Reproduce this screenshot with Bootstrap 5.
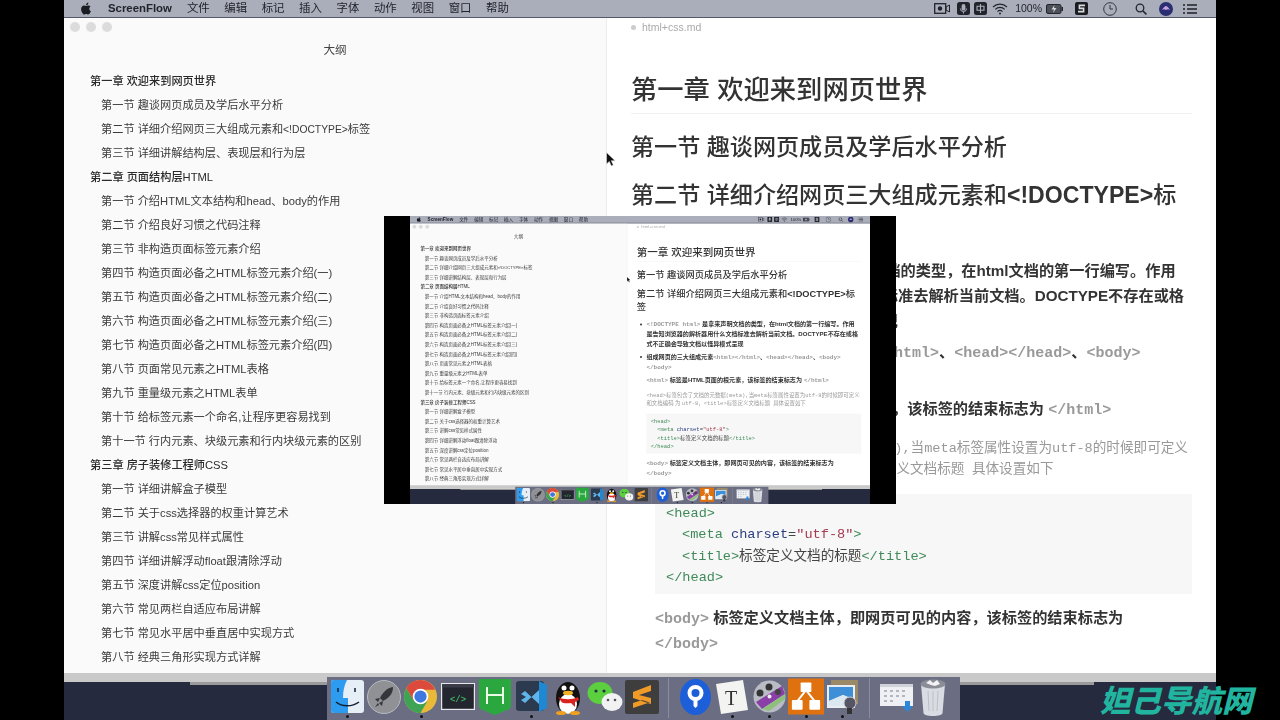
<!DOCTYPE html>
<html lang="zh-CN">
<head>
    <meta charset="UTF-8">
    <meta name="viewport" content="width=device-width, initial-scale=1.0">
    <title>ScreenFlow recording</title>
    <link rel="stylesheet" href="https://cdn.jsdelivr.net/npm/bootstrap@5.3.0/dist/css/bootstrap.min.css">
    <style>
        :root {
            --cjk: "Liberation Sans", "Noto Sans CJK SC", sans-serif;
            --mono: "Liberation Mono", "Noto Sans CJK SC", monospace;
        }
        html, body { margin: 0; width: 1280px; height: 720px; overflow: hidden; background: #000; font-family: var(--cjk); }

        .stage { position: relative; width: 1280px; height: 720px; }
        .stage-live { position: absolute; left: 64px; top: 0; filter: blur(.5px); }
        .mac-screen { position: relative; width: 1152px; height: 720px; overflow: hidden;
            background: linear-gradient(#2b2e42, #262a3e); }

        /* menu bar */
        .menu-bar { height: 18px; background: #a9aeba; border-bottom: 1px solid #55586a; padding: 0 19px 0 16px; font-size: 11.4px; color: #22242c; }
        .menu-bar .app-name { font-weight: 700; font-size: 11.4px; margin: 0 15px 0 16px; }
        .menu-items { gap: 14.6px; }
        .menu-pct { font-size: 10.5px; }
        .sb-5 { margin-left: 5px; } .sb-7 { margin-left: 7px; } .sb-10 { margin-left: 10px; } .sb-12 { margin-left: 12px; }
        .sb-15 { margin-left: 15px; } .sb-18 { margin-left: 18px; }

        /* window */
        .behind-win { position: absolute; left: 126px; top: 600px; width: 904px; height: 85px; background: #9a9a9a; }
        .app-win { position: absolute; left: 0; top: 18px; width: 1152px; height: 664px; background: #fff; overflow: hidden; border-bottom: 9px solid #c9c9c9; }
        .outline-pane { width: 543px; background: #fbfafb; color: #3b3b3b; border-right: 1px solid #ececec; }
        .traffic { gap: 6px; padding: 4px 0 0 6px; height: 18px; }
        .traffic span { width: 10px; height: 10px; border-radius: 50%; background: #dcdcdc; }
        .outline-title { font-size: 11.6px; text-align: center; line-height: 16px; margin: 6px 0 11px; color: #444; }
        .outline-list { margin: 0; padding: 0 0 0 26px; list-style: none; font-size: 11.2px; line-height: 24px; }
        .outline-list span { font-size: 10.3px; line-height: 1; }
        .ol-ch { font-weight: 500; color: #2a2a2a; }
        .ol-sec { padding-left: 11px; }

        .doc-pane { flex: 1; padding: 0 24px 0 24px; color: #333; min-width: 0; overflow: hidden; }
        .doc-tab { height: 18px; font-size: 10.5px; color: #aaa; gap: 6px; padding-top: 1px; }
        .doc-tab i { width: 5px; height: 5px; border-radius: 50%; background: #ccc; }
        .doc-h1 { font-size: 26.3px; font-weight: 500; line-height: 36px; margin: 36px 0 0; padding-bottom: 5px; border-bottom: 1px solid #f1f1f1; color: #333; }
        .doc-h2 { font-size: 23.1px; font-weight: 500; line-height: 33px; margin: 0; color: #333; }
        .doc-h2 b { font-weight: 700; }
        .doc-h2.first { margin-top: 16.5px; }
        .doc-h2.second { margin-top: 15px; }
        .doc-list { margin: 13px 0 0; padding-left: 24px; font-size: 15.2px; line-height: 25px; font-weight: 700; }
        .doc-list li + li { margin-top: 6px; }
        .doc-p { margin: 0 0 0 24px; font-size: 15.2px; line-height: 25px; font-weight: 700; }
        .doc-p.html-line { margin-top: 7px; }
        .doc-p.muted-line { margin-top: 16px; font-size: 13.6px; line-height: 21px; font-weight: 400; color: #999; }
        .doc-p.body-line { margin-top: 11px; }
        .tag-code { font-family: var(--mono); font-size: 15px; line-height: 1; color: #999; }
        .muted-line .tag-code { font-size: 13.6px; }
        .code-box { margin: 15.5px 0 0 24px; background: #f7f7f7; padding: 9px 11px; height: 100px; font-family: var(--mono); font-size: 13.6px; line-height: 21.4px; color: #444; }
        .code-box .in { padding-left: 16px; }
        .c-tag { color: #3f8a58; }
        .c-attr { color: #2b3f80; }
        .c-str { color: #a53b50; }

        .cursor-arrow { position: absolute; left: 542px; top: 152px; }

        /* dock */
        .dock-bar { position: absolute; left: 263px; top: 677px; width: 633px; height: 43px; background: #6b6e82; padding: 0 0 0 2px; }
        .dock-item { position: relative; width: 36.8px; height: 37px; flex: none; display: flex; align-items: center; justify-content: center; margin-top: 1px; }
        .dock-on::after { content: ""; position: absolute; left: 17px; top: 37px; width: 3px; height: 3px; border-radius: 50%; background: #111; }
        .dock-sep { width: 1px; height: 40px; background: #8b8d9e; margin: 1px 8px; flex: none; }

        /* nested recording */
        .inset-box { position: absolute; left: 384px; top: 216px; width: 512px; height: 288px; background: #000; filter: blur(.6px); }
        .inset-view { width: 460px; height: 288px; margin-left: 26px; overflow: hidden; }
        .inset-view .mac-screen { transform: scale(.4); transform-origin: 0 0; }

        .site-mark { position: absolute; left: 1100px; top: 679px; font-family: "Noto Sans CJK SC", sans-serif; font-size: 30.5px; line-height: 40px; font-weight: 900; font-style: italic; color: #21b5a0; white-space: nowrap; }
    </style>
</head>
<body>
<div class="stage">
    <div class="stage-live">
    <div class="mac-screen" id="screen">
        <div class="behind-win"></div>
        <div class="app-win d-flex">
            <div class="outline-pane flex-shrink-0">
                <div class="traffic d-flex"><span></span><span></span><span></span></div>
                <div class="outline-title">大纲</div>
                <ul class="outline-list">
                    <li class="ol-ch">第一章 欢迎来到网页世界</li>
                    <li class="ol-sec">第一节 趣谈网页成员及学后水平分析</li>
                    <li class="ol-sec">第二节 详细介绍网页三大组成元素和<span>&lt;!DOCTYPE&gt;</span>标签</li>
                    <li class="ol-sec">第三节 详细讲解结构层、表现层和行为层</li>
                    <li class="ol-ch">第二章 页面结构层HTML</li>
                    <li class="ol-sec">第一节 介绍HTML文本结构和head、body的作用</li>
                    <li class="ol-sec">第二节 介绍良好习惯之代码注释</li>
                    <li class="ol-sec">第三节 非构造页面标签元素介绍</li>
                    <li class="ol-sec">第四节 构造页面必备之HTML标签元素介绍(一)</li>
                    <li class="ol-sec">第五节 构造页面必备之HTML标签元素介绍(二)</li>
                    <li class="ol-sec">第六节 构造页面必备之HTML标签元素介绍(三)</li>
                    <li class="ol-sec">第七节 构造页面必备之HTML标签元素介绍(四)</li>
                    <li class="ol-sec">第八节 页面常见元素之HTML表格</li>
                    <li class="ol-sec">第九节 重量级元素之HTML表单</li>
                    <li class="ol-sec">第十节 给标签元素一个命名,让程序更容易找到</li>
                    <li class="ol-sec">第十一节 行内元素、块级元素和行内块级元素的区别</li>
                    <li class="ol-ch">第三章 房子装修工程师CSS</li>
                    <li class="ol-sec">第一节 详细讲解盒子模型</li>
                    <li class="ol-sec">第二节 关于css选择器的权重计算艺术</li>
                    <li class="ol-sec">第三节 讲解css常见样式属性</li>
                    <li class="ol-sec">第四节 详细讲解浮动float跟清除浮动</li>
                    <li class="ol-sec">第五节 深度讲解css定位position</li>
                    <li class="ol-sec">第六节 常见两栏自适应布局讲解</li>
                    <li class="ol-sec">第七节 常见水平居中垂直居中实现方式</li>
                    <li class="ol-sec">第八节 经典三角形实现方式详解</li>
                </ul>
            </div>
            <div class="doc-pane">
                <div class="doc-tab d-flex align-items-center"><i></i><span>html+css.md</span></div>
                <h1 class="doc-h1">第一章 欢迎来到网页世界</h1>
                <h2 class="doc-h2 first">第一节 趣谈网页成员及学后水平分析</h2>
                <h2 class="doc-h2 second">第二节 详细介绍网页三大组成元素和<b>&lt;!DOCTYPE&gt;</b>标签</h2>
                <ul class="doc-list">
                    <li><span class="tag-code">&lt;!DOCTYPE html&gt;</span> 是拿来声明文档的类型，在html文档的第一行编写。作用<br>是告知浏览器的解析器用什么文档标准去解析当前文档。DOCTYPE不存在或格式不正确会导致文档以怪异模式呈现</li>
                    <li>组成网页的三大组成元素<span class="tag-code">&lt;html&gt;&lt;/html&gt;</span>、<span class="tag-code">&lt;head&gt;&lt;/head&gt;</span>、<span class="tag-code">&lt;body&gt;</span> <span class="tag-code">&lt;/body&gt;</span></li>
                </ul>
                <p class="doc-p html-line"><span class="tag-code">&lt;html&gt;</span> 标签是HTML页面的根元素，该标签的结束标志为 <span class="tag-code">&lt;/html&gt;</span></p>
                <p class="doc-p muted-line"><span class="tag-code">&lt;head&gt;</span>标签包含了文档的元数据<span class="tag-code">(meta),</span>当<span class="tag-code">meta</span>标签属性设置为<span class="tag-code">utf-8</span>的时候即可定义 和文档编码 为&nbsp;<span class="tag-code">utf-8</span>，<span class="tag-code">&lt;title&gt;</span>标签定义文档标题&nbsp;&nbsp;具体设置如下</p>
                <div class="code-box">
                    <div><span class="c-tag">&lt;head&gt;</span></div>
                    <div class="in"><span class="c-tag">&lt;meta</span> <span class="c-attr">charset</span>=<span class="c-str">"utf-8"</span><span class="c-tag">&gt;</span></div>
                    <div class="in"><span class="c-tag">&lt;title&gt;</span>标签定义文档的标题<span class="c-tag">&lt;/title&gt;</span></div>
                    <div><span class="c-tag">&lt;/head&gt;</span></div>
                </div>
                <p class="doc-p body-line"><span class="tag-code">&lt;body&gt;</span> 标签定义文档主体，即网页可见的内容，该标签的结束标志为<br><span class="tag-code">&lt;/body&gt;</span></p>
            </div>
        </div>

        <div class="menu-bar position-relative d-flex align-items-center">
            <svg width="12" height="13" viewBox="0 0 24 24"><path fill="#1c1d22" d="M12.152 6.896c-.948 0-2.415-1.078-3.96-1.04-2.04.027-3.91 1.183-4.961 3.014-2.117 3.675-.546 9.103 1.519 12.09 1.013 1.454 2.208 3.09 3.792 3.039 1.52-.065 2.09-.987 3.935-.987 1.831 0 2.35.987 3.96.948 1.637-.026 2.676-1.48 3.676-2.948 1.156-1.688 1.636-3.325 1.662-3.415-.039-.013-3.182-1.221-3.22-4.857-.026-3.04 2.48-4.494 2.597-4.559-1.429-2.09-3.623-2.324-4.39-2.376-2-.156-3.675 1.09-4.61 1.09zM15.53 3.83c.843-1.012 1.4-2.427 1.245-3.83-1.207.052-2.662.805-3.532 1.818-.78.896-1.454 2.338-1.273 3.714 1.338.104 2.715-.688 3.559-1.701"/></svg>
            <span class="app-name">ScreenFlow</span>
            <div class="menu-items d-flex">
                <span>文件</span><span>编辑</span><span>标记</span><span>插入</span><span>字体</span><span>动作</span><span>视图</span><span>窗口</span><span>帮助</span>
            </div>
            <div class="ms-auto d-flex align-items-center">
                <svg width="16" height="11" viewBox="0 0 16 11"><rect x=".7" y=".7" width="11" height="9.6" fill="none" stroke="#22242c" stroke-width="1.3"/><circle cx="6" cy="5.5" r="2.2" fill="#22242c"/><path d="M12 4l3.5-2v7L12 7z" fill="none" stroke="#22242c"/></svg>
                <svg class="sb-7" width="13" height="13" viewBox="0 0 13 13"><rect width="13" height="13" rx="2.5" fill="#22242c"/><rect x="4.6" y="2" width="3.8" height="6.6" rx="1.9" fill="#a9aeba"/><path d="M3.4 6.5a3.1 3.1 0 0 0 6.2 0M6.5 9.6v2" stroke="#a9aeba" fill="none"/></svg>
                <svg class="ms-1" width="13" height="13" viewBox="0 0 13 13"><rect width="13" height="13" rx="2.5" fill="#22242c"/><path d="M3 4.3h7v4H3zM6.5 2v9" stroke="#a9aeba" stroke-width="1.1" fill="none"/></svg>
                <svg class="sb-5" width="16" height="12" viewBox="0 0 16 12"><path d="M1 4a10 10 0 0 1 14 0M3.3 6.3a6.8 6.8 0 0 1 9.4 0M5.5 8.6a3.6 3.6 0 0 1 5 0" stroke="#22242c" stroke-width="1.1" fill="none"/><circle cx="8" cy="10.6" r="1" fill="#22242c"/></svg>
                <span class="menu-pct sb-7">100%</span>
                <svg class="ms-1" width="17" height="10" viewBox="0 0 17 10"><rect x=".5" y=".5" width="14.5" height="9" rx="1.5" fill="#4d5059" stroke="#22242c"/><rect x="15.5" y="3" width="1.5" height="4" fill="#22242c"/><path d="M8.5 1L5.5 5.5h2.5L7 9l3.5-5H8z" fill="#d5d7dd"/></svg>
                <svg class="sb-12" width="13" height="13" viewBox="0 0 13 13"><rect width="13" height="13" rx="2" fill="#1b1c20"/><path d="M10 3.4H4.4v3h4.2v3.2H3" stroke="#d8dae0" stroke-width="1.6" fill="none"/></svg>
                <svg class="sb-15" width="14" height="14" viewBox="0 0 14 14"><circle cx="7" cy="7" r="6.3" fill="none" stroke="#33353e"/><path d="M7 3v4h3" stroke="#33353e" fill="none"/></svg>
                <svg class="sb-18" width="12" height="12" viewBox="0 0 12 12"><circle cx="5" cy="5" r="3.8" fill="none" stroke="#22242c" stroke-width="1.3"/><path d="M8 8l3.4 3.4" stroke="#22242c" stroke-width="1.6"/></svg>
                <svg class="sb-12" width="14" height="14" viewBox="0 0 14 14"><circle cx="7" cy="7" r="7" fill="#2b2f72"/><path d="M3 8c2-3 3-4 4-4s2 1 4 4c-1.500-1-2.500-1-4 0-1.500-1-2.500-1-4 0z" fill="#c8a3e0"/></svg>
                <svg class="sb-10" width="14" height="10" viewBox="0 0 14 10"><path d="M4 1h10M4 5h10M4 9h10M0 1h2M0 5h2M0 9h2" stroke="#1f2026" stroke-width="1.5"/></svg>
            </div>
        </div>

        <svg class="cursor-arrow" width="10" height="15" viewBox="0 0 10 15"><path d="M.5.5v11.500l2.800-2.600 2 4.600 2-.9-2-4.400h3.800z" fill="#111" stroke="#eee" stroke-width=".5"/></svg>

        <div class="dock-bar d-flex">
            <div class="dock-item dock-on">
                <svg width="33" height="33" viewBox="0 0 33 33"><rect width="33" height="33" rx="3" fill="#e6eef6"/><path d="M3 0h13c-3 6-4 11-4 18h5v15H3a3 3 0 0 1-3-3V3a3 3 0 0 1 3-3z" fill="#2d9cf0"/><path d="M7 8v4M24 8v4M5 22c6 5 16 5 23 0" stroke="#123" stroke-width="1.500" fill="none"/></svg>
            </div>
            <div class="dock-item">
                <svg width="34" height="34" viewBox="0 0 34 34"><circle cx="17" cy="17" r="16.500" fill="#8f9195" stroke="#b8bac0"/><path d="M26 7c-6 1-10 5-13 11l3 3c6-3 10-7 10-14zM13 18l-5 1 3 3zM16 21l-1 5-3-3zM11 23l-3 4 4-2z" fill="#34363c"/></svg>
            </div>
            <div class="dock-item dock-on">
                <svg width="35" height="35" viewBox="0 0 36 36"><circle cx="18" cy="18" r="17" fill="#e9b93a"/><path d="M18 1a17 17 0 0 0-14.700 8.500L11 22l7-11h15A17 17 0 0 0 18 1z" fill="#dc4a3e"/><path d="M3.300 9.500A17 17 0 0 0 18 35l7-12-7 2-7-3z" fill="#3fa356"/><circle cx="18" cy="18" r="8" fill="#fff"/><circle cx="18" cy="18" r="6.300" fill="#3f78e0"/></svg>
            </div>
            <div class="dock-item">
                <svg width="34" height="27" viewBox="0 0 34 27"><rect x=".6" y=".6" width="32.800" height="25.800" fill="#23262f" stroke="#e8e8ec" stroke-width="1.200"/><rect x="1" y="1" width="32" height="3.500" fill="#3a3d48"/><text x="17" y="19" text-anchor="middle" font-family="Liberation Mono" font-size="9" font-weight="700" fill="#3fae5f">&lt;/&gt;</text></svg>
            </div>
            <div class="dock-item">
                <svg width="34" height="36" viewBox="0 0 34 36"><path d="M1 0h32v26c0 3-1 4-4 5l-12 5-12-5c-3-1-4-2-4-5z" fill="#2aa83f"/><path d="M9 8v17M25 8v17M9 16h16" stroke="#eafbe8" stroke-width="2" fill="none"/></svg>
            </div>
            <div class="dock-item dock-on">
                <svg width="33" height="33" viewBox="0 0 33 33"><rect x="1" y="1" width="28" height="30" rx="3" fill="#2b3a4f"/><path d="M24 1l8 4v23l-8 4z" fill="#1e88d2"/><path d="M24 8v16L10 11l-4 3 5 3-5 3 4 3 14-13z" fill="#5fb4ea"/></svg>
            </div>
            <div class="dock-item">
                <svg width="30" height="36" viewBox="0 0 30 36"><ellipse cx="15" cy="19" rx="12" ry="16" fill="#111"/><ellipse cx="15" cy="25" rx="9" ry="10" fill="#fff"/><circle cx="11" cy="9" r="2.500" fill="#fff"/><circle cx="19" cy="9" r="2.500" fill="#fff"/><ellipse cx="15" cy="14" rx="5" ry="2.200" fill="#f0b323"/><path d="M5 18c6 3 14 3 20 0l1 3-4 2v5l-4-4c-3 .5-6 .5-9-.5z" fill="#d9231f"/><ellipse cx="8" cy="34" rx="5" ry="2" fill="#f0a01f"/><ellipse cx="22" cy="34" rx="5" ry="2" fill="#f0a01f"/></svg>
            </div>
            <div class="dock-item">
                <svg width="36" height="32" viewBox="0 0 36 32"><ellipse cx="13" cy="12" rx="12.500" ry="11" fill="#5ccf3f"/><circle cx="9" cy="10" r="1.600" fill="#234"/><circle cx="17" cy="10" r="1.600" fill="#234"/><ellipse cx="25" cy="21" rx="10.500" ry="9" fill="#f2f2f2"/><circle cx="21" cy="19" r="1.300" fill="#555"/><circle cx="28" cy="19" r="1.300" fill="#555"/></svg>
            </div>
            <div class="dock-item">
                <svg width="34" height="34" viewBox="0 0 34 34"><rect width="34" height="34" rx="2" fill="#3e3e3e"/><path d="M26 5L8 12v6l18 6v-6L14 15l12-4zM8 17l18 6v-1L8 28v-5l12-4z" fill="#f09a28"/></svg>
            </div>
            <div class="dock-sep"></div>
            <div class="dock-item">
                <svg width="31" height="36" viewBox="0 0 31 36"><ellipse cx="15.500" cy="18" rx="15.500" ry="18" fill="#1d5fd8"/><circle cx="15.500" cy="14" r="6" fill="none" stroke="#fff" stroke-width="4"/><path d="M13.500 19h4v8l-2 2-2-2z" fill="#fff"/></svg>
            </div>
            <div class="dock-item dock-on">
                <svg width="34" height="36" viewBox="0 0 34 36"><path d="M1 5l27-4 5 30-27 4z" fill="#f3f3f1"/><text x="16" y="26" text-anchor="middle" font-family="Liberation Serif" font-size="20" fill="#333">T</text></svg>
            </div>
            <div class="dock-item dock-on">
                <svg width="33" height="33" viewBox="0 0 33 33"><circle cx="16.500" cy="16.500" r="16" fill="#b9bcc4"/><path d="M3 22L29 6l3 8L9 29z" fill="#8a3fa8"/><path d="M9 29l23-15 0 5-16 12z" fill="#8ec07c"/><circle cx="16" cy="7" r="3.500" fill="#333"/><circle cx="7" cy="13" r="3.500" fill="#333"/><circle cx="25" cy="12" r="3" fill="#444"/><circle cx="16.500" cy="16.500" r="2" fill="#eee"/></svg>
            </div>
            <div class="dock-item dock-on">
                <svg width="36" height="37" viewBox="0 0 37 37"><rect width="37" height="37" fill="#e0710f"/><path d="M18.500 12L9 24M18.500 12L28 24" stroke="#fff" stroke-width="2"/><rect x="13" y="4" width="11" height="10" rx="1" fill="#fff"/><rect x="4" y="22" width="11" height="10" rx="1" fill="#fff"/><rect x="22" y="22" width="11" height="10" rx="1" fill="#fff"/></svg>
            </div>
            <div class="dock-item dock-on">
                <svg width="34" height="34" viewBox="0 0 34 34"><rect x="5" y="0" width="27" height="24" fill="#9a8a68"/><rect x="1" y="5" width="28" height="23" fill="#e8eef4"/><path d="M3 7h24v12l-10-4-14 6z" fill="#3f8fd8"/><path d="M3 21l14-6 10 4v7H3z" fill="#dce8f0"/><circle cx="24" cy="23" r="6" fill="#556" stroke="#ccc"/><rect x="21" y="28" width="5" height="6" fill="#333"/></svg>
            </div>
            <div class="dock-sep"></div>
            <div class="dock-item">
                <svg width="34" height="30" viewBox="0 0 34 30"><rect y="2" width="33" height="22" fill="#eef0f4"/><rect y="2" width="33" height="3" fill="#cfd2d8"/><path d="M4 9h3M10 9h3M16 9h3M22 9h3M4 14h3M10 14h3M16 14h3M22 14h3M4 19h3M10 19h3" stroke="#b3b6be" stroke-width="2"/><path d="M25 19h5v5h3l-5.500 6-5.500-6h3z" fill="#2d86d8"/></svg>
            </div>
            <div class="dock-item">
                <svg width="26" height="38" viewBox="0 0 26 38"><path d="M1 6h24l-2.500 29c-.3 2-4 3-9.500 3s-9.200-1-9.500-3z" fill="#d9dce2"/><ellipse cx="13" cy="6" rx="12.500" ry="4.500" fill="#8a8d96"/><path d="M6 5l4-3 3 3 4-3 3 4-5 2-4-1z" fill="#f2f2f4"/><path d="M8 13l1 20M13 13v20M18 13l-1 20" stroke="#bcc0c8" fill="none"/></svg>
            </div>
        </div>
    </div>
    </div>

    <div class="inset-box"><div class="inset-view" id="insetView"></div></div>
    <div class="site-mark">妲己导航网</div>
</div>

<script>
    // the small picture is the same desktop, recorded one level down
    let copy = document.getElementById("screen").cloneNode(true);
    copy.removeAttribute("id");
    document.getElementById("insetView").appendChild(copy);
</script>
<script src="https://cdn.jsdelivr.net/npm/bootstrap@5.3.0/dist/js/bootstrap.bundle.min.js"></script>
</body>
</html>
